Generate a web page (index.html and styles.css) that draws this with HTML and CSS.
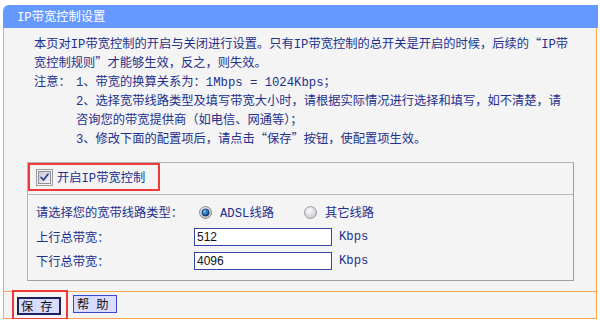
FILE: index.html
```html
<!DOCTYPE html>
<html lang="zh-CN">
<head>
<meta charset="utf-8">
<title>IP带宽控制设置</title>
<link rel="stylesheet" href="styles.css">
</head>
<body>
<div class="wrap">
  <div class="title"><span class="en">IP</span>带宽控制设置</div>
  <div class="panel">
    <div class="intro">
      <p class="para">本页对<span class="en">IP</span>带宽控制的开启与关闭进行设置。只有<span class="en">IP</span>带宽控制的总开关是开启的时候，后续的<span class="q">“</span><span class="en">IP</span>带<br>宽控制规则<span class="q r">”</span>才能够生效，反之，则失效。</p>
      <div class="notes">
        <div class="notes-label">注意：</div>
        <div class="notes-list">
          <div><span class="en">1</span>、带宽的换算关系为：<span class="en">1Mbps = 1024Kbps</span>；</div>
          <div><span class="en">2</span>、选择宽带线路类型及填写带宽大小时，请根据实际情况进行选择和填写，如不清楚，请<br>咨询您的带宽提供商（如电信、网通等）；</div>
          <div><span class="en">3</span>、修改下面的配置项后，请点击<span class="q">“</span>保存<span class="q r">”</span>按钮，使配置项生效。</div>
        </div>
      </div>
    </div>

    <div class="fieldset">
      <div class="fs-head">
        <label class="mark-box">
          <svg class="checkbox" width="17" height="17" viewBox="0 0 17 17">
            <defs>
              <linearGradient id="cbg" x1="0" y1="0" x2="1" y2="1">
                <stop offset="0" stop-color="#c9cbd3"/>
                <stop offset="1" stop-color="#f4f4f8"/>
              </linearGradient>
            </defs>
            <rect x="0.5" y="0.5" width="16" height="16" fill="none" stroke="#444" stroke-dasharray="1 1"/>
            <rect x="2.5" y="2.5" width="12" height="12" fill="url(#cbg)" stroke="#8e8f98"/>
            <path d="M5 8.3 L7.4 11 L12 5.2" fill="none" stroke="#2c3c9c" stroke-width="1.7" stroke-linecap="round" stroke-linejoin="round"/>
          </svg>
          <span>开启<span class="en">IP</span>带宽控制</span>
        </label>
      </div>
      <div class="fs-body">
        <div class="row">
          <span class="lbl">请选择您的宽带线路类型：</span>
          <span class="radio-group first">
            <svg class="radio" width="13" height="13" viewBox="0 0 13 13">
              <defs>
                <radialGradient id="rsel" cx="0.4" cy="0.35" r="0.7">
                  <stop offset="0" stop-color="#fafafa"/>
                  <stop offset="1" stop-color="#b9bcc4"/>
                </radialGradient>
                <radialGradient id="rdot" cx="0.4" cy="0.35" r="0.7">
                  <stop offset="0" stop-color="#7fc3f3"/>
                  <stop offset="0.6" stop-color="#1d6fb8"/>
                  <stop offset="1" stop-color="#0b3566"/>
                </radialGradient>
              </defs>
              <circle cx="6.5" cy="6.5" r="6" fill="url(#rsel)" stroke="#8b8d94"/>
              <circle cx="6.5" cy="6.5" r="3.6" fill="url(#rdot)" stroke="#0d2f57" stroke-width="0.8"/>
            </svg>
            <span class="opt"><span class="en">ADSL</span>线路</span>
          </span>
          <span class="radio-group">
            <svg class="radio" width="13" height="13" viewBox="0 0 13 13">
              <defs>
                <radialGradient id="roff" cx="0.4" cy="0.35" r="0.75">
                  <stop offset="0" stop-color="#fbfbfb"/>
                  <stop offset="1" stop-color="#c2c3c8"/>
                </radialGradient>
              </defs>
              <circle cx="6.5" cy="6.5" r="6" fill="url(#roff)" stroke="#9a9ca2"/>
            </svg>
            <span class="opt">其它线路</span>
          </span>
        </div>
        <div class="row">
          <span class="lbl">上行总带宽：</span>
          <input class="field" type="text" value="512">
          <span class="unit en">Kbps</span>
        </div>
        <div class="row">
          <span class="lbl">下行总带宽：</span>
          <input class="field" type="text" value="4096">
          <span class="unit en">Kbps</span>
        </div>
      </div>
    </div>

    <div class="btn-bar">
      <div class="mark-btn">
        <button class="btn primary" type="button">保存</button>
      </div>
      <button class="btn" type="button">帮助</button>
    </div>
  </div>
</div>
</body>
</html>
```

FILE: styles.css
```css
* {
  box-sizing: border-box;
}

body {
  margin: 0;
  background: #ffffff;
  font-family: "Noto Sans CJK SC", sans-serif;
  font-size: 12.25px;
  color: #23308e;
}

.en {
  font-family: "Liberation Mono", monospace;
  line-height: 1;
}

.q {
  display: inline-block;
  width: 12.25px;
  line-height: 1;
  text-align: right;
}

.q.r {
  text-align: left;
}

.wrap {
  margin: 5px 0 0 3px;
  width: 595px;
}

.title {
  height: 23px;
  line-height: 23px;
  background: #6699ff;
  border-radius: 6px 0 0 0;
  color: #ffffff;
  padding-left: 14px;
}

.panel {
  width: 594px;
  background: #f4f4f4;
  border: 1px solid #fda54a;
  border-top: 0;
}

.intro {
  padding: 6px 0 0 30px;
  line-height: 19px;
}

.para {
  margin: 0;
}

.notes {
  display: grid;
  grid-template-columns: 42px 1fr;
}

.fieldset {
  margin: 14px 0 0 23px;
  width: 547px;
  border: 1px solid #b3b3b3;
  border-right-color: #a0a0a0;
  border-bottom-color: #a0a0a0;
}

.fs-head {
  height: 32px;
  border-bottom: 1px solid #b8b8b8;
}

.mark-box {
  display: flex;
  align-items: center;
  width: 132px;
  height: 28px;
  border: 2px solid #ee3a3a;
  padding-left: 6px;
  gap: 4px;
}

.checkbox {
  display: block;
  flex: none;
}

.fs-body {
  padding: 5px 0 6.5px 8px;
  display: grid;
  grid-auto-rows: 24.5px;
}

.row {
  display: flex;
  align-items: center;
}

.lbl {
  width: 158px;
  flex: none;
}

.radio-group {
  display: inline-flex;
  align-items: center;
  gap: 8px;
}

.radio-group.first {
  margin-left: 5px;
  width: 105px;
}

.radio {
  display: block;
  flex: none;
}

.field {
  width: 138px;
  height: 18px;
  border: 1px solid #3445a8;
  background: #ffffff;
  padding: 0 2px;
  font-family: "Liberation Sans", sans-serif;
  font-size: 12px;
  color: #111111;
  outline: none;
}

.unit {
  margin-left: 7px;
}

.btn-bar {
  margin-top: 10px;
  height: 27px;
  border-top: 1px solid #fda54a;
  display: flex;
  align-items: flex-start;
}

.mark-btn {
  margin: -2px 0 0 8px;
  width: 56px;
  height: 30px;
  border: 2px solid #ee3a3a;
  padding: 5px 0 0 3px;
}

.btn {
  display: block;
  width: 44px;
  height: 18px;
  padding: 0 0 0 3px;
  background: #dadcff;
  border: 1px solid #3a47c9;
  border-radius: 0;
  font-family: "Noto Sans CJK SC", sans-serif;
  font-size: 12.25px;
  line-height: 14px;
  letter-spacing: 7px;
  white-space: nowrap;
  overflow: hidden;
  color: #111111;
  text-align: left;
}

.btn.primary {
  border: 2px solid #1b2161;
  padding-left: 2px;
}

.btn-bar > .btn {
  margin: 3px 0 0 5px;
}
```
